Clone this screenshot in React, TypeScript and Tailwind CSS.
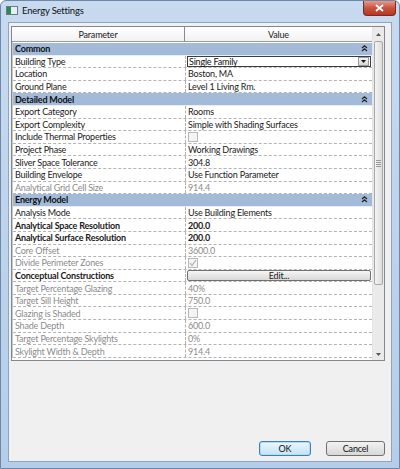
import React from "react";

type Row =
  | { kind: "group"; label: string }
  | {
      kind: "row";
      label: string;
      value?: string;
      type?: "text" | "combo" | "check" | "button";
      dim?: boolean;
      bold?: boolean;
      boldValue?: boolean;
      checked?: boolean;
    };

const rows: Row[] = [
  { kind: "group", label: "Common" },
  { kind: "row", label: "Building Type", value: "Single Family", type: "combo" },
  { kind: "row", label: "Location", value: "Boston, MA" },
  { kind: "row", label: "Ground Plane", value: "Level 1 Living Rm." },
  { kind: "group", label: "Detailed Model" },
  { kind: "row", label: "Export Category", value: "Rooms" },
  { kind: "row", label: "Export Complexity", value: "Simple with Shading Surfaces" },
  { kind: "row", label: "Include Thermal Properties", type: "check" },
  { kind: "row", label: "Project Phase", value: "Working Drawings" },
  { kind: "row", label: "Sliver Space Tolerance", value: "304.8" },
  { kind: "row", label: "Building Envelope", value: "Use Function Parameter" },
  { kind: "row", label: "Analytical Grid Cell Size", value: "914.4", dim: true },
  { kind: "group", label: "Energy Model" },
  { kind: "row", label: "Analysis Mode", value: "Use Building Elements" },
  { kind: "row", label: "Analytical Space Resolution", value: "200.0", bold: true, boldValue: true },
  { kind: "row", label: "Analytical Surface Resolution", value: "200.0", bold: true, boldValue: true },
  { kind: "row", label: "Core Offset", value: "3600.0", dim: true },
  { kind: "row", label: "Divide Perimeter Zones", type: "check", checked: true, dim: true },
  { kind: "row", label: "Conceptual Constructions", type: "button", value: "Edit...", bold: true },
  { kind: "row", label: "Target Percentage Glazing", value: "40%", dim: true },
  { kind: "row", label: "Target Sill Height", value: "750.0", dim: true },
  { kind: "row", label: "Glazing is Shaded", type: "check", dim: true },
  { kind: "row", label: "Shade Depth", value: "600.0", dim: true },
  { kind: "row", label: "Target Percentage Skylights", value: "0%", dim: true },
  { kind: "row", label: "Skylight Width & Depth", value: "914.4", dim: true },
];

function Collapse() {
  return (
    <svg width="7" height="7" viewBox="0 0 7 7" className="mr-[4px]">
      <path d="M1 3 L3.5 0.8 L6 3 M1 6 L3.5 3.8 L6 6" stroke="#222" strokeWidth="1.2" fill="none" />
    </svg>
  );
}

function Check({ checked }: { checked?: boolean }) {
  return (
    <div className="w-[10px] h-[10px] border border-[#b8b8b8] bg-[#f4f4f4] flex items-center justify-center">
      {checked && (
        <svg width="8" height="8" viewBox="0 0 8 8">
          <path d="M1 4 L3 6.5 L7 1" stroke="#b0b0b0" strokeWidth="1.2" fill="none" />
        </svg>
      )}
    </div>
  );
}

function PropRow({ r }: { r: Row }) {
  if (r.kind === "group") {
    return (
      <div className="h-[12.6px] bg-[#a3bbd9] flex items-center justify-between pl-[2px] font-bold text-[#111] border-b border-[#e8eef6]">
        <span>{r.label}</span>
        <Collapse />
      </div>
    );
  }
  const color = r.dim ? "text-[#8c8c8c]" : "text-[#1a1a1a]";
  return (
    <div className="h-[12.6px] flex border-b border-dashed border-[#b4b4b4] bg-white">
      <div
        className={`w-[173px] shrink-0 pl-[2px] flex items-center border-r border-dashed border-[#b4b4b4] ${color} ${r.bold ? "font-bold" : ""}`}
      >
        {r.label}
      </div>
      <div className={`flex-1 flex items-center ${color} ${r.boldValue ? "font-bold" : ""}`}>
        {(!r.type || r.type === "text") && <span className="pl-[2px]">{r.value}</span>}
        {r.type === "check" && (
          <div className="pl-[2px]">
            <Check checked={r.checked} />
          </div>
        )}
        {r.type === "combo" && (
          <div className="flex-1 h-full border border-[#3c3c3c] bg-white flex items-center justify-between ml-[1px] mr-[1px]">
            <span className="pl-[1px] text-[#111]">Single Family</span>
            <div className="w-[11px] h-[9px] mr-[1px] bg-gradient-to-b from-[#f4f4f4] to-[#d6d6d6] border border-[#9a9a9a] flex items-center justify-center">
              <svg width="5" height="3" viewBox="0 0 5 3">
                <path d="M0 0 L5 0 L2.5 3 Z" fill="#111" />
              </svg>
            </div>
          </div>
        )}
        {r.type === "button" && (
          <div className="flex-1 h-[11px] mx-[1px] rounded-[2px] border border-[#707070] bg-gradient-to-b from-[#f6f6f6] to-[#d8d8d8] flex items-center justify-center text-[#222] font-normal">
            {r.value}
          </div>
        )}
      </div>
    </div>
  );
}

export default function App() {
  return (
    <div
      className="w-[400px] h-[469px] bg-gradient-to-b from-[#c7daef] to-[#b5cde8] border border-[#6d88a8] rounded-t-[6px] flex flex-col overflow-hidden text-[9px] leading-none tracking-[-0.2px]"
      style={{ fontFamily: 'Lato, "Open Sans", sans-serif' }}
    >
      <div className="h-[21px] shrink-0 flex items-start justify-between">
        <div className="flex items-center gap-[4px] pl-[5px] pt-[5px]">
          <div className="w-[12px] h-[9px] border border-[#6b7b8b] bg-white flex">
            <div className="w-[4px] bg-[#2f8a4a]" />
            <div className="flex-1 bg-[#e6eef6]" />
          </div>
          <span className="text-[9.5px] text-[#111]">Energy Settings</span>
        </div>
        <div className="w-[33px] h-[15px] mr-[3px] rounded-b-[4px] border border-[#7a2a22] border-t-0 bg-gradient-to-b from-[#e49a8c] via-[#c9523f] to-[#b8341f] flex items-center justify-center">
          <svg width="9" height="8" viewBox="0 0 9 8">
            <path d="M1 1 L8 7 M8 1 L1 7" stroke="#fff" strokeWidth="1.8" />
          </svg>
        </div>
      </div>
      <div className="flex-1 mx-[7px] mb-[6px] bg-[#f0f0f0] border border-[#8ea5c0] flex flex-col">
        <div className="mt-[3px] ml-[2px] w-[374px] h-[335px] border border-[#828790] flex bg-white">
          <div className="w-[361px] flex flex-col">
            <div className="h-[15px] shrink-0 flex border-b border-[#9a9a9a] bg-gradient-to-b from-white to-[#f2f2f2] text-[#222]">
              <div className="w-[173px] flex items-center justify-center border-r border-[#8a8a8a]">Parameter</div>
              <div className="flex-1 flex items-center justify-center">Value</div>
            </div>
            <div className="pt-[1px] border-l border-[#c8c8c8]">
              {rows.map((r, i) => (
                <PropRow key={i} r={r} />
              ))}
            </div>
          </div>
          <div className="w-[12px] border-l border-[#e4e4e4] bg-[#eaeaea] flex flex-col">
            <div className="h-[14px] flex items-center justify-center">
              <svg width="5" height="3" viewBox="0 0 5 3">
                <path d="M0 3 L5 3 L2.5 0 Z" fill="#555" />
              </svg>
            </div>
            <div className="mx-[1px] h-[244px] rounded-[2px] border border-[#a8a8a8] bg-gradient-to-r from-[#f4f4f4] to-[#dcdcdc] flex items-center justify-center">
              <div className="flex flex-col gap-[1px]">
                <div className="w-[5px] h-px bg-[#9a9a9a]" />
                <div className="w-[5px] h-px bg-[#9a9a9a]" />
                <div className="w-[5px] h-px bg-[#9a9a9a]" />
                <div className="w-[5px] h-px bg-[#9a9a9a]" />
              </div>
            </div>
            <div className="flex-1" />
            <div className="h-[12px] flex items-center justify-center">
              <svg width="5" height="3" viewBox="0 0 5 3">
                <path d="M0 0 L5 0 L2.5 3 Z" fill="#555" />
              </svg>
            </div>
          </div>
        </div>
        <div className="flex-1" />
        <div className="flex justify-end gap-[15px] pr-[6px] pb-[5px] items-end">
          <button className="w-[52px] h-[15px] rounded-[3px] border border-[#3c7fb1] bg-gradient-to-b from-[#eaf6fd] to-[#c5e3f5] text-[#111] text-[9px] shadow-[inset_0_0_0_1px_#b4dcf4]">
            OK
          </button>
          <button className="w-[59px] h-[15px] rounded-[3px] border border-[#707070] bg-gradient-to-b from-[#f2f2f2] to-[#d8d8d8] text-[#111] text-[9px]">
            Cancel
          </button>
        </div>
      </div>
    </div>
  );
}
